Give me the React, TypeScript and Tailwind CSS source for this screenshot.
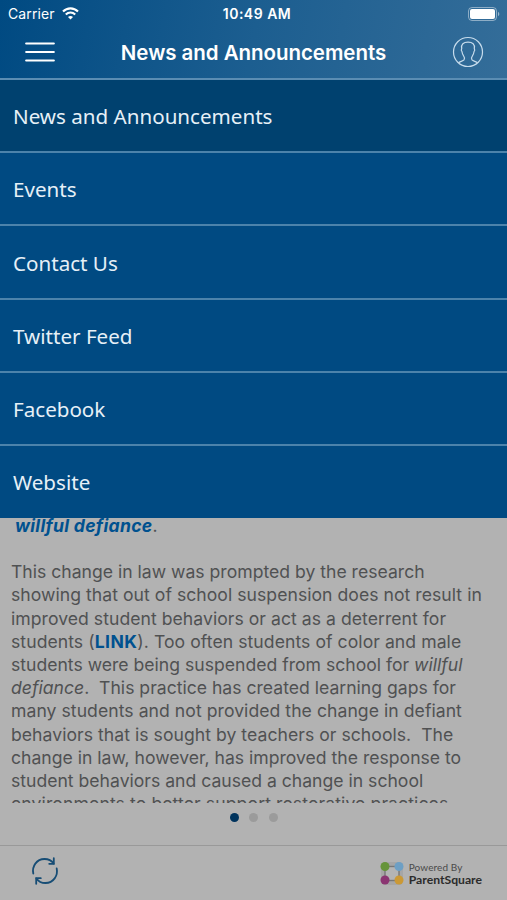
const menuItems = [
  "News and Announcements",
  "Events",
  "Contact Us",
  "Twitter Feed",
  "Facebook",
  "Website",
];

function StatusBar() {
  return (
    <div className="grid h-[27px] grid-cols-3 items-center pl-[8px] pr-[7px] text-[14px]">
      <div className="flex items-center gap-[7px]">
        <span className="tracking-[0.1px]">Carrier</span>
        <svg width="17" height="13" viewBox="0 0 17 13" fill="none" stroke="currentColor" strokeWidth="2.1">
          <path d="M1 4.6C5.2.3 11.8.3 16 4.6" />
          <path d="M3.8 7.5c2.6-2.6 6.8-2.6 9.4 0" />
          <path d="M8.5 12.5 6 9.9c1.4-1.3 3.6-1.3 5 0z" fill="currentColor" stroke="none" />
        </svg>
      </div>
      <span className="pl-[6px] text-center font-semibold tracking-[0.5px]">10:49 AM</span>
      <svg className="ml-auto" width="32" height="14" viewBox="0 0 32 14" fill="none">
        <rect x="0.5" y="0.5" width="28" height="13" rx="3.5" stroke="white" strokeOpacity="0.45" />
        <rect x="2" y="2" width="25" height="10" rx="2" fill="white" />
        <path d="M30 4.8c1.8.7 1.8 3.7 0 4.400z" fill="white" fillOpacity="0.5" />
      </svg>
    </div>
  );
}

function NavBar() {
  return (
    <div className="flex h-[50px] items-center justify-between pl-[25px] pr-[23px]">
      <svg width="30" height="22" viewBox="0 0 30 22" stroke="white" strokeWidth="2.2" strokeLinecap="round">
        <path d="M1.2 2.5h27.6M1.2 11h27.6M1.2 19.5h27.6" />
      </svg>
      <h1 className="pt-[3px] text-[20.5px] font-semibold tracking-[-0.05px] whitespace-nowrap">News and Announcements</h1>
      <svg width="32" height="32" viewBox="0 0 32 32" fill="none" stroke="#c7dcec" strokeWidth="1.2">
        <circle cx="16" cy="16" r="14.5" />
        <path d="M6.5 26.800c1.500-1.300 4.500-1.600 5.500-2.900.8-1.200.5-2.900-.4-4.100-1-1.500-1.400-2.500-1.600-4.100-.8-.9-.8-2.300-.3-3.100C8.900 8.300 11.500 6.200 16 6.200s7.100 2.100 6.300 6.400c.5.8.5 2.200-.3 3.100-.2 1.600-.6 2.600-1.600 4.100-.9 1.200-1.200 2.900-.4 4.100 1 1.300 4 1.600 5.500 2.900" />
      </svg>
    </div>
  );
}

function Menu() {
  return (
    <nav className="bg-[#004a82] font-['Noto_Sans',sans-serif] text-[20.6px] text-[#e6f0f7]">
      {menuItems.map((item, index) => (
        <div
          key={item}
          className={
            index === 0
              ? "flex h-[73.2px] items-center border-b-2 border-[#4c83ab] bg-[#00416f] pt-[2px] pl-[13px]"
              : "flex h-[73.2px] items-center border-b-2 border-[#4c83ab] pt-[2px] pl-[13px] last:h-[72px] last:border-b-0 last:pt-px"
          }
        >
          {item}
        </div>
      ))}
    </nav>
  );
}

function Article() {
  return (
    <article className="h-[285px] overflow-hidden pl-[11px] text-[17.6px] leading-[23.2px] whitespace-pre text-[#505152]">
      <p className="-mt-[4px] pl-[4px]">
        <b className="font-bold tracking-[0.3px] text-[#00518f] italic">willful defiance</b>.
      </p>
      <div className="mt-[23px]">
        <p>This change in law was prompted by the research</p>
        <p className="tracking-[0.04px]">showing that out of school suspension does not result in</p>
        <p className="tracking-[0.04px]">improved student behaviors or act as a deterrent for</p>
        <p className="tracking-[0.06px]">students (<b className="font-bold tracking-[0.4px] text-[#00518f]">LINK</b>). Too often students of color and male</p>
        <p>students were being suspended from school for <i>willful</i></p>
        <p><i>defiance</i>.  This practice has created learning gaps for</p>
        <p className="tracking-[0.05px]">many students and not provided the change in defiant</p>
        <p className="tracking-[0.04px]">behaviors that is sought by teachers or schools.  The</p>
        <p>change in law, however, has improved the response to</p>
        <p>student behaviors and caused a change in school</p>
        <p className="tracking-[0.1px]">environments to better support restorative practices.</p>
      </div>
    </article>
  );
}

function Footer() {
  return (
    <footer className="flex h-[55px] items-center justify-between border-t border-[#999] pr-[25px] pb-[4px] pl-[31px]">
      <svg width="28" height="28" viewBox="0 0 28 28" fill="none" stroke="#174d75" strokeWidth="1.8" strokeLinecap="round">
        <path d="M2.300 16.500C.8 9.500 5.500 2 13.500 2c4 0 7 1.500 9.100 4.600" />
        <path d="M22.800 1.200v5.600h-4.600" />
        <path d="M25.700 11.500C27.200 18.500 22.500 26 14.500 26c-4 0-7-1.500-9.100-4.600" />
        <path d="M5.200 26.800v-5.600h4.600" />
      </svg>
      <div className="flex items-center gap-[5px] pt-[5px]">
        <svg width="24" height="25" viewBox="0 0 24 25">
          <rect x="1" y="1" width="22" height="23" rx="4" fill="#a6a6a6" />
          <rect x="5" y="5.5" width="14" height="14" fill="#b4b4b4" stroke="#777" strokeWidth="1.4" />
          <circle cx="5" cy="5.5" r="4.5" fill="#66943a" />
          <circle cx="19" cy="5.5" r="4.5" fill="#6d9fc4" />
          <circle cx="5" cy="19" r="4.5" fill="#8b3572" />
          <circle cx="19" cy="19" r="4.5" fill="#cb9935" />
        </svg>
        <div className="font-['Lato',sans-serif] text-[#4a4a4a]">
          <div className="text-[10px] leading-[12px] tracking-[0.1px]">Powered By</div>
          <div className="text-[12.2px] leading-[13px] font-bold text-[#2b2b2b]">ParentSquare</div>
        </div>
      </div>
    </footer>
  );
}

export default function App() {
  return (
    <div className="flex h-[900px] w-[507px] flex-col overflow-hidden bg-[#b2b2b2] font-['Inter',sans-serif]">
      <header className="h-[80px] border-b-2 border-[#5b8db3] bg-linear-[100deg,#004a82,#1c5e90_50%,#346d99] text-white">
        <StatusBar />
        <NavBar />
      </header>
      <Menu />
      <Article />
      <div className="flex h-[42px] justify-center gap-[10.5px] pt-[10px]">
        <span className="size-[9px] rounded-full bg-[#00335d]" />
        <span className="size-[9px] rounded-full bg-[#9b9b9b]" />
        <span className="size-[9px] rounded-full bg-[#9b9b9b]" />
      </div>
      <Footer />
    </div>
  );
}
